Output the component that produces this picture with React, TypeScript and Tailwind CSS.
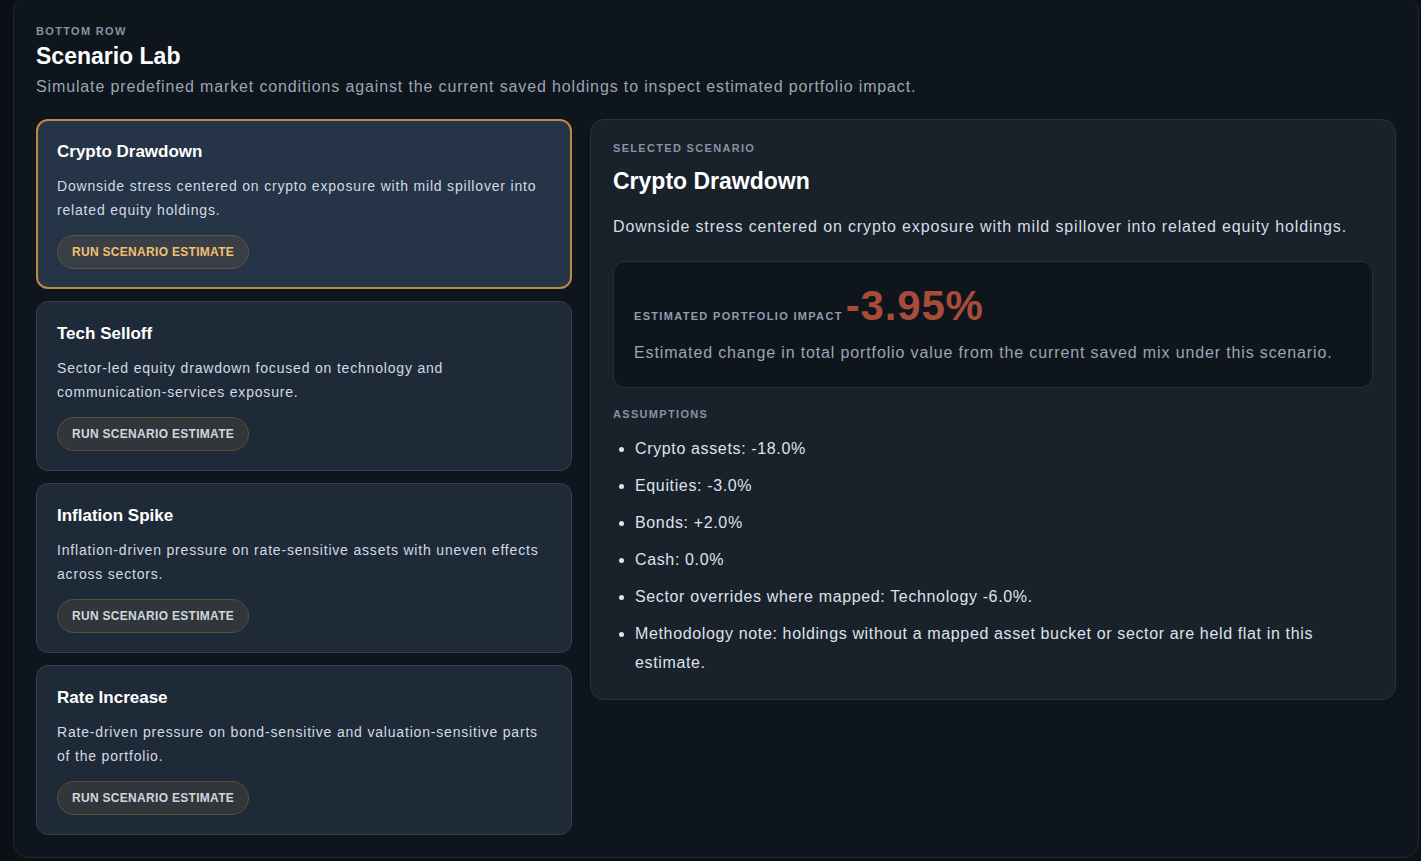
import React from 'react';

type Scenario = {
  id: string;
  name: string;
  description: string;
};

const scenarios: Scenario[] = [
  {
    id: 'crypto',
    name: 'Crypto Drawdown',
    description: 'Downside stress centered on crypto exposure with mild spillover into related equity holdings.',
  },
  {
    id: 'tech',
    name: 'Tech Selloff',
    description: 'Sector-led equity drawdown focused on technology and communication-services exposure.',
  },
  {
    id: 'inflation',
    name: 'Inflation Spike',
    description: 'Inflation-driven pressure on rate-sensitive assets with uneven effects across sectors.',
  },
  {
    id: 'rates',
    name: 'Rate Increase',
    description: 'Rate-driven pressure on bond-sensitive and valuation-sensitive parts of the portfolio.',
  },
];

const assumptions = [
  'Crypto assets: -18.0%',
  'Equities: -3.0%',
  'Bonds: +2.0%',
  'Cash: 0.0%',
  'Sector overrides where mapped: Technology -6.0%.',
  'Methodology note: holdings without a mapped asset bucket or sector are held flat in this estimate.',
];

export default function App() {
  const selected = scenarios[0];

  return (
    <div className="min-h-screen overflow-hidden bg-[#0b1016] font-['Liberation_Sans',sans-serif] text-white">
      <section className="ml-[13px] -mt-[6px] w-[1406px] rounded-2xl border border-[#1f2833] bg-[#0f151d] px-[22px] pt-[28px] pb-[22px]">
        {/* Header */}
        <p className="text-[11px] font-bold uppercase tracking-[0.12em] text-[#8593a3]">Bottom Row</p>
        <h2 className="text-[23px] font-bold leading-8 text-white">Scenario Lab</h2>
        <p className="mt-[3px] text-[16px] leading-6 tracking-[0.054em] text-[#9aa6b3]">
          Simulate predefined market conditions against the current saved holdings to inspect estimated portfolio impact.
        </p>

        <div className="mt-[20px] grid grid-cols-[536px_1fr] gap-[18px]">
          {/* Scenario list */}
          <div className="flex flex-col gap-3">
            {scenarios.map((s) => (
              <ScenarioCard key={s.id} scenario={s} active={s.id === selected.id} />
            ))}
          </div>

          {/* Selected scenario detail */}
          <div className="self-start rounded-[14px] border border-[#263140] bg-[#19212b] px-[22px] pt-[20px] pb-[22px]">
            <p className="text-[11px] font-bold uppercase tracking-[0.12em] text-[#8593a3]">Selected Scenario</p>
            <h3 className="mt-[11px] text-[23px] font-bold leading-7 text-white">{selected.name}</h3>
            <p className="mt-[20px] text-[16px] leading-6 tracking-[0.054em] text-[#d6dde5]">{selected.description}</p>

            <div className="mt-[22px] rounded-xl border border-[#243040] bg-[#0f151d] px-5 pt-[20px] pb-[22px]">
              <div className="flex items-baseline gap-[3px]">
                <span className="text-[11px] font-bold uppercase tracking-[0.12em] text-[#8f9cab]">Estimated Portfolio Impact</span>
                <span className="text-[42px] font-bold leading-[48px] tracking-[0.02em] text-[#a84c3a]">-3.95%</span>
              </div>
              <p className="mt-[11px] text-[16px] leading-6 tracking-[0.054em] text-[#9aa6b3]">
                Estimated change in total portfolio value from the current saved mix under this scenario.
              </p>
            </div>

            <p className="mt-[18px] text-[11px] font-bold uppercase tracking-[0.12em] text-[#8593a3]">Assumptions</p>
            <ul className="mt-[11px] flex list-disc flex-col gap-2 pl-[22px] text-[16px] leading-[29px] tracking-[0.04em] text-[#dde3ea] marker:text-[#dde3ea]">
              {assumptions.map((a) => (
                <li key={a}>{a}</li>
              ))}
            </ul>
          </div>
        </div>
      </section>
    </div>
  );
}

function ScenarioCard({ scenario, active }: { scenario: Scenario; active: boolean }) {
  return (
    <div
      className={`h-[170px] rounded-xl ${
        active ? 'border-2 border-[#b88a48] bg-[#263447] px-[19px] pt-[19px]' : 'border border-[#334152] bg-[#1f2a38] px-5 pt-[20px]'
      }`}
    >
      <h4 className="text-[17px] font-bold leading-6 text-white">{scenario.name}</h4>
      <p className="mt-[10px] text-[14px] leading-6 tracking-[0.058em] text-[#d3dae3]">{scenario.description}</p>
      <button
        className={`mt-[13px] h-[34px] rounded-full border px-[14px] text-[12px] font-bold uppercase tracking-[0.025em] ${
          active
            ? 'border-[#5a5446] bg-[#3a3f46] text-[#f0c070]'
            : 'border-[#5a4d36] bg-[#31363b] text-[#cfd6df]'
        }`}
      >
        Run Scenario Estimate
      </button>
    </div>
  );
}
